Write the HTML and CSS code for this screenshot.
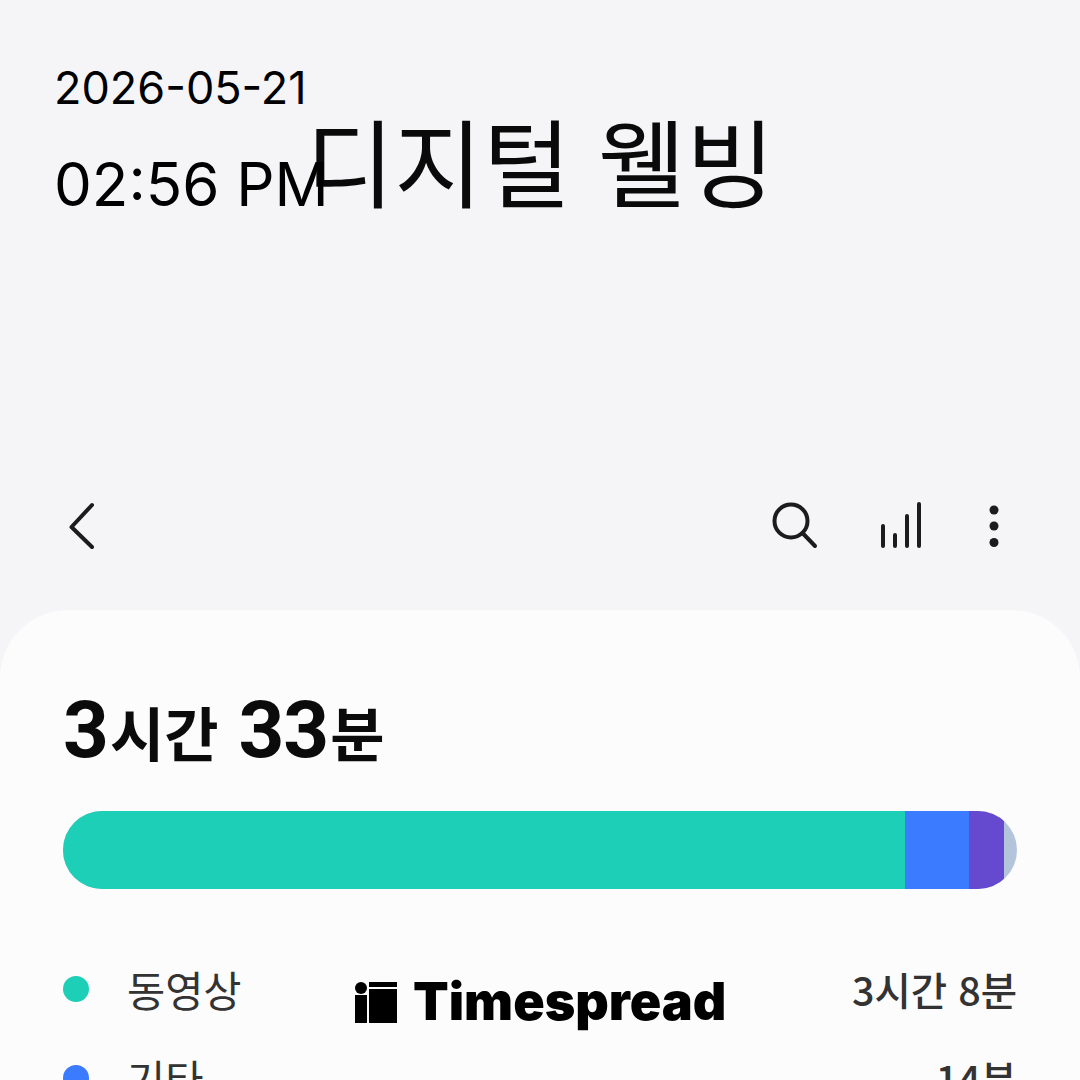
FILE: index.html
```html
<!DOCTYPE html>
<html lang="ko">
<head>
    <meta charset="UTF-8">
    <meta name="viewport" content="width=device-width, initial-scale=1.0">
    <link rel="stylesheet" href="styles.css">
    <title>디지털 웰빙</title>
</head>
<body>
    <div class="screen">
        <div class="stamp">
            <div class="stamp-date">2026-05-21</div>
            <div class="stamp-time">02:56 PM</div>
        </div>

        <header class="header">
            <h1 class="title">디지털 웰빙</h1>
        </header>

        <nav class="toolbar">
            <svg class="icon-back" width="40" height="60" viewBox="0 0 40 60">
                <path d="M28 8 L7.500 30 L28 50" />
            </svg>
            <div class="toolbar-actions">
                <svg class="icon-search" width="50" height="50" viewBox="0 0 50 50">
                    <circle cx="21" cy="19" r="16.500" />
                    <path d="M32.500 31 L45 44" />
                </svg>
                <svg class="icon-bars" width="44" height="50" viewBox="0 0 44 50">
                    <path d="M4 24 V44 M16 33 V44 M28 14 V44 M40 2 V44" />
                </svg>
                <svg class="icon-more" width="12" height="50" viewBox="0 0 12 50">
                    <circle cx="6" cy="8" r="4.500" />
                    <circle cx="6" cy="24" r="4.500" />
                    <circle cx="6" cy="40.500" r="4.500" />
                </svg>
            </div>
        </nav>

        <main class="card">
            <div class="total">
                <span class="total-num">3</span><span class="total-unit">시간</span>
                <span class="total-num total-gap">33</span><span class="total-unit">분</span>
            </div>

            <div class="usage-bar">
                <div class="seg seg-video"></div>
                <div class="seg seg-other"></div>
                <div class="seg seg-purple"></div>
            </div>

            <ul class="legend">
                <li class="legend-row">
                    <span class="dot dot-video"></span>
                    <span class="legend-name">동영상</span>
                    <span class="legend-time">3시간 8분</span>
                </li>
                <li class="legend-row">
                    <span class="dot dot-other"></span>
                    <span class="legend-name">기타</span>
                    <span class="legend-time">14분</span>
                </li>
            </ul>
        </main>

        <div class="watermark">
            <svg width="42" height="41" viewBox="0 0 42 41">
                <circle cx="6" cy="6" r="6" />
                <rect x="0" y="13" width="12" height="28" />
                <rect x="14" y="0" width="28" height="5" />
                <rect x="14" y="7" width="28" height="34" />
            </svg>
            <span class="watermark-text">Timespread</span>
        </div>
    </div>
</body>
</html>
```

FILE: styles.css
```css
body {
    margin: 0;
    font-family: 'Noto Sans CJK KR', 'Noto Sans', sans-serif;
    color: #000;
}

.screen {
    position: relative;
    width: 1080px;
    height: 1080px;
    overflow: hidden;
    background-color: #f5f5f8;
}

/* date stamp sits on top of the screenshot */
.stamp {
    position: absolute;
    left: 54px;
    top: 60px;
    font-family: 'Inter', sans-serif;
}

.stamp-date {
    font-size: 45px;
    line-height: 56px;
}

.stamp-time {
    margin-top: 32px;
    font-size: 60px;
    line-height: 72px;
}

.header {
    height: 490px;
    padding-left: 306px;
    box-sizing: border-box;
}

.title {
    margin: 0;
    padding-top: 89px;
    font-size: 96px;
    font-weight: 400;
    line-height: 140px;
    color: #0a0a0a;
}

.toolbar {
    display: flex;
    justify-content: space-between;
    align-items: center;
    height: 74px;
    padding: 0 80px 0 64px;
}

.toolbar-actions {
    display: flex;
    align-items: center;
    gap: 59px;
}

.toolbar svg {
    fill: none;
    stroke: #1c1c1e;
    stroke-width: 4;
    stroke-linecap: round;
    stroke-linejoin: round;
}

.toolbar .icon-more {
    margin-left: 6px;
    fill: #1c1c1e;
    stroke: none;
}

.card {
    margin-top: 46px;
    height: 470px;
    padding: 0 63px;
    background-color: #fcfcfc;
    border-radius: 68px 68px 0 0;
}

.total {
    display: flex;
    align-items: baseline;
    height: 84px;
    padding-top: 78px;
    line-height: 84px;
    font-weight: 700;
    color: #0b0b0b;
}

.total-num {
    font-family: 'Roboto', sans-serif;
    font-size: 80px;
    line-height: 84px;
    letter-spacing: -1px;
}

.total-gap {
    margin-left: 20px;
}

.total-unit {
    margin-left: 2px;
    font-size: 59px;
    line-height: 84px;
}

.usage-bar {
    display: flex;
    height: 78px;
    margin-top: 39px;
    border-radius: 39px;
    overflow: hidden;
    background-color: #b4c4da;
}

.seg {
    height: 100%;
}

.seg-video {
    width: 842px;
    background-color: #1ccfb6;
}

.seg-other {
    width: 64px;
    background-color: #3a7bff;
}

.seg-purple {
    width: 35px;
    background-color: #6549cf;
}

.legend {
    margin: 0;
    padding: 0;
    list-style: none;
}

.legend-row {
    display: flex;
    align-items: center;
    height: 89px;
    font-size: 41.500px;
    color: #333;
}

.legend-row:first-child {
    margin-top: 55px;
}

.dot {
    width: 26px;
    height: 26px;
    border-radius: 50%;
}

.dot-video {
    background-color: #1ccfb6;
}

.dot-other {
    background-color: #3a7bff;
}

.legend-name {
    margin-left: 38px;
    flex: 1;
}

.legend-time {
    font-weight: 500;
    font-size: 39.500px;
}

.watermark {
    position: absolute;
    left: 355px;
    top: 982px;
    display: flex;
    align-items: center;
    gap: 16px;
}

.watermark-text {
    margin-top: -3px;
    font-family: 'Inter', sans-serif;
    font-size: 52px;
    font-weight: 900;
    line-height: 41px;
}
```
